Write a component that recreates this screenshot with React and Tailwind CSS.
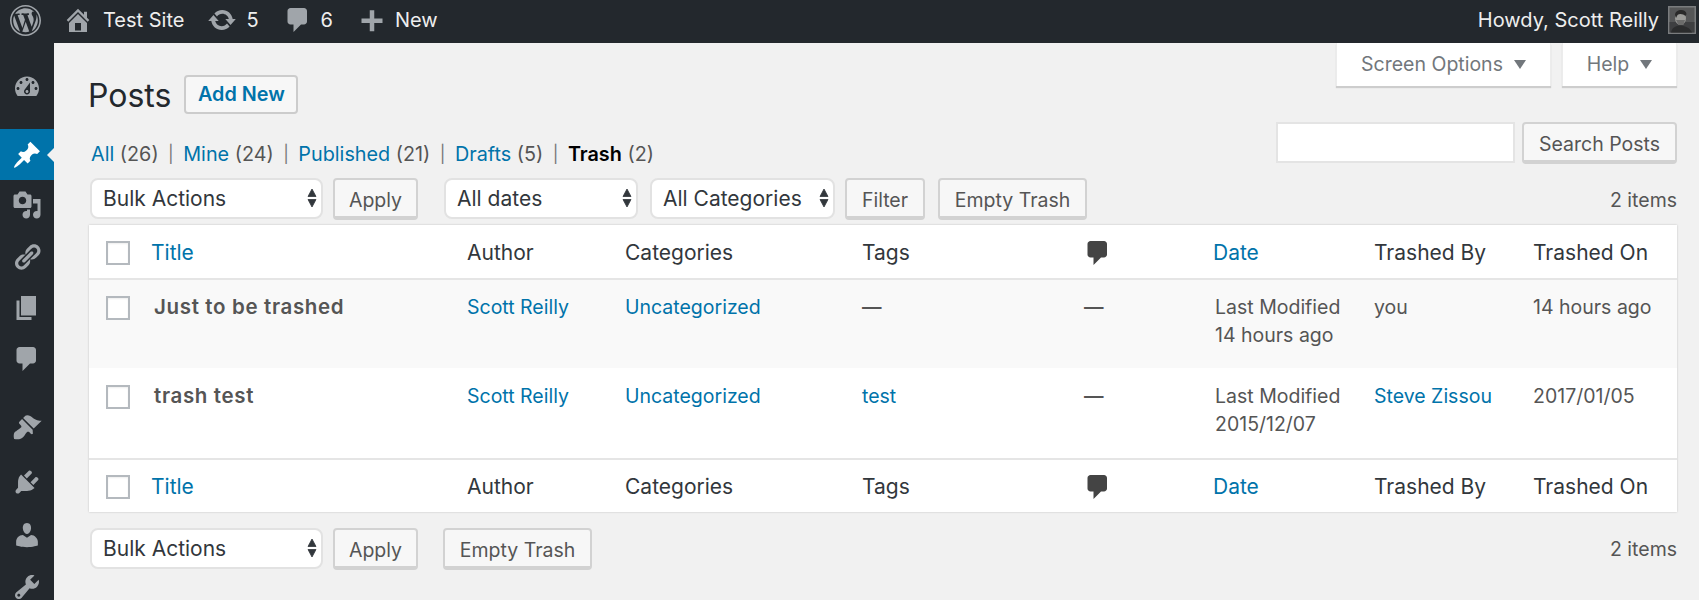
import React from "react";

const P = {
  wp: "M20 10c0-5.52-4.48-10-10-10S0 4.48 0 10s4.48 10 10 10 10-4.48 10-10zM10 1.01c4.96 0 8.99 4.03 8.99 8.99s-4.03 8.99-8.99 8.99S1.01 14.96 1.01 10 5.04 1.01 10 1.01zM8.01 14.82L4.96 6.61c.49-.03 1.05-.08 1.05-.08.43-.05.38-1.01-.06-.99 0 0-1.29.1-2.13.1-.15 0-.33 0-.52-.01 1.44-2.17 3.9-3.6 6.7-3.6 2.09 0 3.99.79 5.41 2.09-.6-.08-1.45.35-1.45 1.42 0 .66.38 1.22.79 1.88.31.54.5 1.22.5 2.21 0 1.34-1.27 4.48-1.27 4.48l-2.71-7.5c.48-.03.75-.16.75-.16.43-.05.38-1.1-.05-1.08 0 0-1.3.11-2.14.11-.78 0-2.11-.11-2.11-.11-.43-.02-.48 1.06-.05 1.08l.84.08 1.12 3.04zm6.02 2.15L16.64 10s.67-1.69.39-3.81c.63 1.14.94 2.42.94 3.81 0 2.96-1.56 5.58-3.94 7.01zM2.68 6.77L6.5 17.25c-2.67-1.3-4.47-4.08-4.47-7.25 0-1.16.2-2.23.65-3.23zm7.45 4.09l2.29 6.25c-.75.27-1.57.42-2.42.42-.72 0-1.41-.11-2.06-.3z",
  home: "M16 8.5l1.53 1.53-1.06 1.06L10 4.62l-6.47 6.47-1.06-1.06L10 2.5l4 4v-2h2v4zm-6-2.46l6 5.99V18H4v-5.97zM12 17v-5H8v5h4z",
  update: "M10.2 3.28c3.53 0 6.43 2.61 6.92 6h2.08l-3.5 4-3.5-4h2.32c-.45-1.97-2.21-3.45-4.32-3.45-1.45 0-2.73.71-3.54 1.78L4.95 5.66C6.23 4.2 8.11 3.28 10.2 3.28zm-.4 13.44c-3.52 0-6.43-2.61-6.92-6H.8l3.5-4c1.17 1.33 2.33 2.67 3.5 4H5.48c.45 1.97 2.21 3.45 4.32 3.45 1.45 0 2.73-.71 3.54-1.78l1.71 1.95c-1.28 1.46-3.15 2.38-5.25 2.38z",
  comment: "M5 2h9c1.1 0 2 .9 2 2v7c0 1.1-.9 2-2 2h-2l-5 5v-5H5c-1.1 0-2-.9-2-2V4c0-1.1.9-2 2-2z",
  plus: "M17 9v3h-5.5v5.5h-3V12H3V9h5.5V3.5h3V9z",
  dashboard: "M3.76 16h12.48c1.1-1.37 1.76-3.11 1.76-5 0-4.42-3.58-8-8-8s-8 3.58-8 8c0 1.89.66 3.63 1.76 5zM10 4c.55 0 1 .45 1 1s-.45 1-1 1-1-.45-1-1 .45-1 1-1zM6 6c.55 0 1 .45 1 1s-.45 1-1 1-1-.45-1-1 .45-1 1-1zm8 0c.55 0 1 .45 1 1s-.45 1-1 1-1-.45-1-1 .45-1 1-1zm-5.37 5.55L12 7v6c0 1.1-.9 2-2 2s-2-.9-2-2c0-.57.24-1.08.63-1.45zM4 10c.55 0 1 .45 1 1s-.45 1-1 1-1-.45-1-1 .45-1 1-1zm12 0c.55 0 1 .45 1 1s-.45 1-1 1-1-.45-1-1 .45-1 1-1zm-5 3c0-.55-.45-1-1-1s-1 .45-1 1 .45 1 1 1 1-.45 1-1z",
  pin: "M10.44 3.02l1.82-1.82 6.36 6.35-1.83 1.82c-1.05-.68-2.48-.57-3.41.36l-.75.75c-.92.93-1.04 2.35-.35 3.41l-1.83 1.82-2.41-2.41-2.8 2.79c-.42.42-3.38 2.71-3.8 2.29s1.86-3.39 2.28-3.81l2.79-2.79L4.1 9.36l1.83-1.82c1.05.69 2.48.57 3.4-.36l.75-.75c.93-.92 1.05-2.35.36-3.41z",
  media: "M13 11V4c0-.55-.45-1-1-1h-1.67L9 1H5L3.67 3H2c-.55 0-1 .45-1 1v7c0 .55.45 1 1 1h10c.55 0 1-.45 1-1zM7 4.5c1.38 0 2.5 1.12 2.5 2.5S8.38 9.5 7 9.5 4.5 8.38 4.5 7 5.62 4.5 7 4.5zM14 6h5v10.5c0 1.38-1.12 2.5-2.5 2.5S14 17.88 14 16.5s1.12-2.5 2.5-2.5c.17 0 .34.02.5.05V9h-3V6zm-4 8.05V13h2v3.5c0 1.38-1.12 2.5-2.5 2.5S7 17.88 7 16.5 8.12 14 9.5 14c.17 0 .34.02.5.05z",
  links: "M17.74 2.76c1.68 1.69 1.68 4.41 0 6.1l-1.53 1.52c-1.12 1.12-2.7 1.47-4.14 1.09l2.62-2.61.76-.77.76-.76c.84-.84.84-2.2 0-3.04-.84-.85-2.2-.85-3.04 0l-.77.76-3.38 3.38c-.37-1.44-.02-3.02 1.1-4.14l1.52-1.53c1.69-1.68 4.42-1.68 6.1 0zM8.59 13.43l5.34-5.34c.42-.42.42-1.1 0-1.52-.44-.43-1.13-.39-1.53 0l-5.33 5.34c-.42.42-.42 1.1 0 1.52.44.43 1.13.39 1.52 0zm-.76 2.29l4.14-4.15c.38 1.44.03 3.02-1.09 4.14l-1.52 1.53c-1.69 1.68-4.41 1.68-6.1 0-1.68-1.68-1.68-4.42 0-6.1l1.53-1.52c1.12-1.12 2.7-1.47 4.14-1.1l-4.14 4.15c-.85.84-.85 2.2 0 3.05.84.84 2.2.84 3.04 0z",
  page: "M6 15V2h10v13H6zm-1 1h8v2H3V5h2v11z",
  brush: "M14.48 11.06L7.41 3.99l1.5-1.5c.5-.56 2.3-.47 3.51.32 1.21.8 1.43 1.28 2.91 2.1 1.18.64 2.45 1.26 4.45.85zm-.71.71L6.7 4.7 4.93 6.47c-.39.39-.39 1.02 0 1.41l1.06 1.06c.39.39.39 1.03 0 1.42-.6.6-1.43 1.11-2.21 1.69-.35.26-.7.53-1.01.84C1.43 13.23.78 15.06 1.4 18c2.94.62 4.77-.03 6.11-1.37.31-.31.58-.66.84-1.01.58-.78 1.09-1.61 1.69-2.21.39-.39 1.03-.39 1.42 0l1.06 1.06c.39.39 1.02.39 1.41 0z",
  plug: "M13.11 4.36L9.87 7.6 8 5.73l3.24-3.24c.35-.34 1.05-.2 1.56.32.52.51.66 1.21.31 1.55zm-8 1.77l.91-1.12 9.01 9.01-1.19.84c-.71.71-2.63 1.16-3.82 1.16H6.14L4.9 17.26c-.59.59-1.54.59-2.12 0-.59-.58-.59-1.53 0-2.12l1.24-1.24v-3.88c0-1.13.4-3.19 1.09-3.89zm7.26 3.97l3.24-3.24c.34-.35 1.04-.21 1.55.31.52.51.66 1.21.31 1.55l-3.24 3.25z",
  users: "M10 9.25c-2.27 0-2.73-3.44-2.73-3.44C7 4.02 7.82 2 9.97 2c2.16 0 2.98 2.02 2.71 3.81 0 0-.41 3.44-2.68 3.44zm0 2.57L12.72 10c2.39 0 4.52 2.33 4.52 4.53v2.49s-3.65 1.13-7.24 1.13c-3.65 0-7.24-1.13-7.24-1.13v-2.49c0-2.25 1.94-4.48 4.47-4.48z",
  tools: "M16.68 9.77c-1.34 1.34-3.3 1.67-4.95.99l-5.41 6.52c-.99.99-2.59.99-3.58 0s-.99-2.59 0-3.57l6.52-5.42c-.68-1.65-.35-3.61.99-4.95 1.28-1.28 3.12-1.62 4.72-1.06l-2.89 2.89 2.82 2.82 2.86-2.87c.53 1.58.18 3.39-1.08 4.65zM3.81 16.21c.4.39 1.04.39 1.43 0 .4-.4.4-1.04 0-1.43-.39-.4-1.03-.4-1.43 0-.39.39-.39 1.03 0 1.43z",
};

function Icon({ d, className }) {
  return (
    <svg viewBox="0 0 20 20" className={className} fill="currentColor">
      <path d={d} />
    </svg>
  );
}

function SideItem({ d, h, active }) {
  return (
    <div className={`relative flex items-center justify-center ${h} ${active ? "bg-[#0073aa] text-white" : "text-[#a0a5aa]"}`}>
      <Icon d={d} className="w-[30px] h-[30px]" />
      {active && <span className="absolute right-0 top-[19px] border-y-[7px] border-r-[7px] border-y-transparent border-r-[#f1f1f1]" />}
    </div>
  );
}

function Btn({ children, className = "" }) {
  return (
    <button className={`h-[42px] rounded-[4px] border-2 border-[#d2d2d2] border-b-[4px] bg-[#f7f7f7] text-[#555] text-[19.5px] flex items-center justify-center pt-[5px] ${className}`}>
      {children}
    </button>
  );
}

function Select({ label, className = "" }) {
  return (
    <div className={`relative h-[41px] ${className}`}>
      <select className="appearance-none w-full h-full rounded-[8px] border-2 border-[#e2e2e2] bg-white pl-[11px] pt-[1px] text-[21px] text-[#32373c] outline-none">
        <option>{label}</option>
      </select>
      <svg viewBox="0 0 10 20" className="absolute right-[6px] top-[10px] w-[10px] h-[20px] pointer-events-none" fill="#32373c" stroke="#32373c" strokeWidth="0.8" strokeLinejoin="round">
        <path d="M5 1l4 7.5H1zM5 19l-4-7.5h8z" />
      </svg>
    </div>
  );
}

function Check() {
  return <span className="block w-[24px] h-[24px] border-2 border-[#b4b9be] bg-white shadow-[inset_0_1px_2px_rgba(0,0,0,0.07)]" />;
}

const cols = "grid grid-cols-[62px_316px_158px_237px_224px_127px_161px_159px_1fr]";

function HeadRow({ className }) {
  return (
    <div className={`${cols} items-center text-[#32373c] text-[21px] ${className}`}>
      <div className="pl-[17px]"><Check /></div>
      <a className="text-[#0073aa]">Title</a>
      <span>Author</span>
      <span>Categories</span>
      <span>Tags</span>
      <Icon d={P.comment} className="w-[30px] h-[30px] -ml-[3px] text-[#444]" />
      <a className="text-[#0073aa]">Date</a>
      <span>Trashed By</span>
      <span>Trashed On</span>
    </div>
  );
}

function Dash() {
  return <span className="font-semibold text-[#555]">—</span>;
}

function Row({ title, tag, modified, by, on, className }) {
  return (
    <div className={`${cols} leading-[28px] text-[#555] ${className}`}>
      <div className="pl-[17px] pt-[3px]"><Check /></div>
      <span className="pl-[3px] font-semibold text-[20.5px] tracking-[0.65px]">{title}</span>
      <a className="text-[#0073aa]">Scott Reilly</a>
      <a className="text-[#0073aa]">Uncategorized</a>
      {tag ? <a className="text-[#0073aa]">{tag}</a> : <Dash />}
      <span className="-ml-[2px]"><Dash /></span>
      <div className="pl-[2px]">Last Modified<br />{modified}</div>
      {by === "you" ? <span>you</span> : <a className="text-[#0073aa]">{by}</a>}
      <span>{on}</span>
    </div>
  );
}

function Count({ label, n, cur }) {
  return cur ? (
    <span><span className="text-black font-semibold">{label}</span> <span className="text-[#555]">({n})</span></span>
  ) : (
    <span><a className="text-[#0073aa]">{label}</a> <span className="text-[#555]">({n})</span></span>
  );
}

export default function App() {
  const Sep = () => <span className="text-[#777] mx-[9.5px] text-[17px]">|</span>;
  return (
    <div className="w-[1699px] h-[600px] overflow-hidden flex flex-col bg-[#f1f1f1] font-['Inter','Liberation_Sans',sans-serif] text-[19.5px]">
      <header className="h-[43px] shrink-0 bg-[#23282d] flex items-center pb-[3px] text-[#eee] text-[20px]">
        <Icon d={P.wp} className="w-[31px] h-[31px] ml-[10px] text-[#a0a5aa]" />
        <Icon d={P.home} className="w-[30px] h-[30px] ml-[22px] text-[#a0a5aa]" />
        <span className="ml-[10px]">Test Site</span>
        <Icon d={P.update} className="w-[30px] h-[30px] ml-[23px] text-[#a0a5aa]" />
        <span className="ml-[9px]">5</span>
        <Icon d={P.comment} className="w-[30px] h-[30px] ml-[24px] text-[#a0a5aa]" />
        <span className="ml-[8px]">6</span>
        <Icon d={P.plus} className="w-[30px] h-[30px] ml-[24px] text-[#a0a5aa]" />
        <span className="ml-[8px]">New</span>
        <span className="ml-auto">Howdy, Scott Reilly</span>
        <svg viewBox="0 0 28 28" className="w-[28px] h-[28px] ml-[9px] mr-[3px]">
          <rect width="28" height="28" fill="#7a7c7e" />
          <rect x="1.5" y="1.5" width="25" height="25" fill="#555657" />
          <rect x="1.5" y="16" width="25" height="10.5" fill="#3e3f41" />
          <ellipse cx="12.5" cy="12" rx="5.5" ry="7" fill="#9b9b98" />
          <path d="M7 9c0-6 11-7 11.5-1l-1 2c-2-2-6-3-8-1l-1.5 3z" fill="#2a2a2a" />
          <path d="M8 14h9l-1.5 5h-5z" fill="#6c6c6b" />
          <path d="M3 26.5c1-5 5-7 9-7s10 2 12 7z" fill="#2b2c2d" />
        </svg>
      </header>

      <div className="flex-1 flex min-h-0">
        <nav className="w-[54px] shrink-0 bg-[#23282d] flex flex-col">
          <SideItem d={P.dashboard} h="h-[86px] pt-[2px]" />
          <SideItem d={P.pin} h="h-[51px]" active />
          <SideItem d={P.media} h="h-[50px]" />
          <SideItem d={P.links} h="h-[53px]" />
          <SideItem d={P.page} h="h-[50px]" />
          <SideItem d={P.comment} h="h-[52px]" />
          <SideItem d={P.brush} h="h-[70px] pt-[14px]" />
          <SideItem d={P.plug} h="h-[53px]" />
          <SideItem d={P.users} h="h-[53px]" />
          <SideItem d={P.tools} h="h-[38px] pt-[14px] overflow-hidden" />
        </nav>

        <main className="flex-1 min-w-0 pl-[35px] pr-[22px] text-[#444]">
          <div className="h-[135px] flex justify-between">
            <div className="pt-[32px]">
              <div className="flex items-center h-[39px]">
                <h1 className="text-[32px] text-[#23282d] font-normal leading-none -ml-[1px] pt-[2px]">Posts</h1>
                <button className="ml-[13px] h-[39px] w-[114px] border-2 border-[#ccc] rounded-[4px] bg-[#f7f7f7] text-[#0073aa] font-semibold text-[19.8px] flex items-center justify-center pt-[1px]">Add New</button>
              </div>
              <div className="mt-[26px] h-[28px] leading-[28px] pl-[2px] flex text-[19.8px]">
                <Count label="All" n="26" /><Sep />
                <Count label="Mine" n="24" /><Sep />
                <Count label="Published" n="21" /><Sep />
                <Count label="Drafts" n="5" /><Sep />
                <Count label="Trash" n="2" cur />
              </div>
            </div>
            <div className="flex flex-col items-end">
              <div className="flex gap-[11px] text-[#72777c]">
                <div className="h-[43px] w-[215px] bg-white border-x border-[#ececec] shadow-[0_2px_1px_rgba(0,0,0,0.15)] flex items-center justify-center gap-[11px] pt-[1px]">
                  Screen Options
                  <span className="border-x-[6px] border-t-[9px] border-x-transparent border-t-[#72777c] -mt-[2px]" />
                </div>
                <div className="h-[43px] w-[115px] bg-white border-x border-[#ececec] shadow-[0_2px_1px_rgba(0,0,0,0.15)] flex items-center justify-center gap-[11px] pt-[1px]">
                  Help
                  <span className="border-x-[6px] border-t-[9px] border-x-transparent border-t-[#72777c] -mt-[2px]" />
                </div>
              </div>
              <div className="mt-[36px] flex gap-[7px]">
                <input className="w-[239px] h-[41px] bg-white border-2 border-[#e4e4e4] outline-none" />
                <Btn className="w-[155px]">Search Posts</Btn>
              </div>
            </div>
          </div>

          <div className="h-[42px] flex items-start">
            <Select label="Bulk Actions" className="w-[233px] ml-px" />
            <Btn className="w-[85px] ml-[10px]">Apply</Btn>
            <Select label="All dates" className="w-[194px] ml-[26px]" />
            <Select label="All Categories" className="w-[185px] ml-[12px]" />
            <Btn className="w-[80px] ml-[10px]">Filter</Btn>
            <Btn className="w-[149px] ml-[13px]">Empty Trash</Btn>
            <span className="ml-auto leading-[44px] text-[#555]">2 items</span>
          </div>

          <div className="mt-[5px] h-[287px] bg-white shadow-[0_0_2px_rgba(0,0,0,0.2)] flex flex-col">
            <HeadRow className="h-[55px] border-b-2 border-[#e5e5e5] pt-[3px]" />
            <Row title="Just to be trashed" modified="14 hours ago" by="you" on="14 hours ago" className="h-[88px] bg-[#f9f9f9] pt-[13px]" />
            <Row title="trash test" tag="test" modified="2015/12/07" by="Steve Zissou" on="2017/01/05" className="h-[90px] pt-[14px]" />
            <HeadRow className="h-[54px] border-t-2 border-[#e5e5e5] pt-[1px]" />
          </div>

          <div className="mt-[16px] h-[42px] flex items-start">
            <Select label="Bulk Actions" className="w-[233px] ml-px" />
            <Btn className="w-[85px] ml-[10px]">Apply</Btn>
            <Btn className="w-[149px] ml-[25px]">Empty Trash</Btn>
            <span className="ml-auto leading-[42px] text-[#555]">2 items</span>
          </div>
        </main>
      </div>
    </div>
  );
}
